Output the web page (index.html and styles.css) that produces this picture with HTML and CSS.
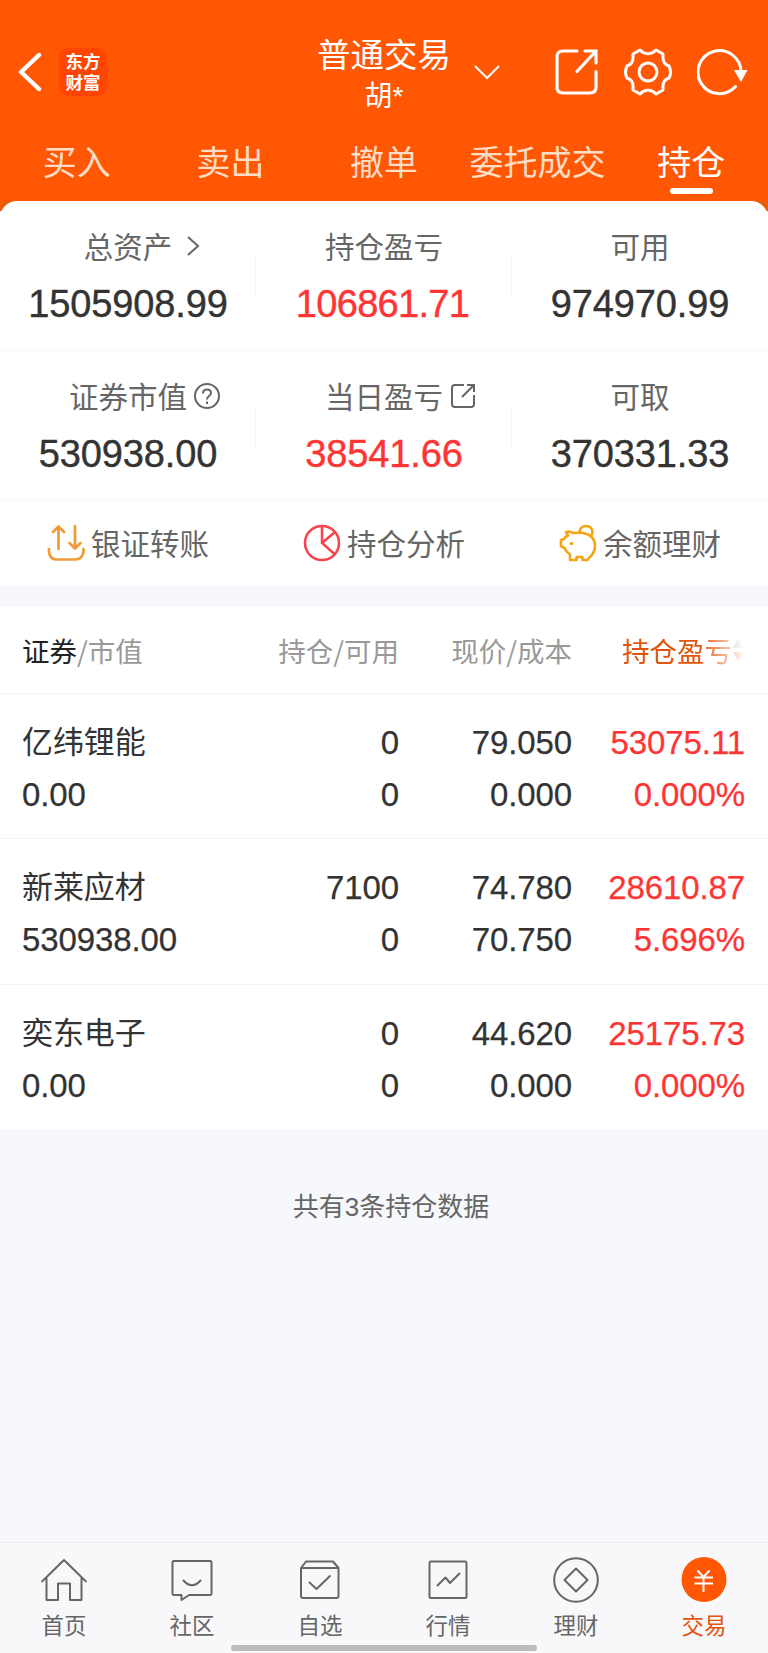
FILE: index.html
```
<!DOCTYPE html>
<html lang="zh-CN">
<head>
    <meta charset="UTF-8">
    <meta name="viewport" content="width=device-width, initial-scale=1.0">
    <title>普通交易 - 持仓</title>
    <link rel="stylesheet" href="styles.css">
</head>
<body>
    <header class="header">
        <div class="topbar">
            <div class="topbar-left">
                <svg class="back" width="24" height="40" viewBox="0 0 24 40"><path d="M21 3L3 20L21 37" fill="none" stroke="#fff" stroke-width="4.4" stroke-linecap="round" stroke-linejoin="round"/></svg>
                <div class="logo">东方<br>财富</div>
            </div>
            <div class="title">
                <h1>普通交易</h1>
                <p>胡*</p>
            </div>
            <div class="topbar-right">
                <svg class="chevron" width="28" height="16" viewBox="0 0 28 16"><path d="M2 2L14 14L26 2" fill="none" stroke="#fff" stroke-width="2"/></svg>
                <svg class="share" width="44" height="48" viewBox="0 0 44 48" fill="none" stroke="#fff" stroke-width="3.2" stroke-linecap="round"><path d="M23 3H9Q3 3 3 9V39Q3 45 9 45H36Q42 45 42 39V23.500M31 3H42V15M41 4L23 23.500"/></svg>
                <svg class="gear" width="48" height="48" viewBox="0 0 48 48" fill="none" stroke="#fff" stroke-width="3" stroke-linejoin="round"><path d="M16 2L19 4.500Q24 7 29 4.500L32 2L39 6V10Q39 16 45 18Q48 24 45 30Q39 32 39 38V42L32 46L29 43.500Q24 41 19 43.500L16 46L9 42V38Q9 32 3 30Q0 24 3 18Q9 16 9 10V6Z"/><circle cx="24" cy="24" r="9"/></svg>
                <svg class="refresh" width="52" height="48" viewBox="0 0 52 48"><path d="M38.500 38.500A21.500 21.500 0 1 1 44 24" fill="none" stroke="#fff" stroke-width="3" stroke-linecap="round"/><path d="M37 22H50.500L44 34Z" fill="#fff"/></svg>
            </div>
        </div>
        <nav class="tabs">
            <a>买入</a>
            <a>卖出</a>
            <a>撤单</a>
            <a>委托成交</a>
            <a class="active">持仓</a>
        </nav>
    </header>

    <section class="summary-wrap">
        <div class="summary">
            <div class="summary-row">
                <div class="cell">
                    <div class="label">总资产<svg class="arrow" width="14" height="20" viewBox="0 0 14 20"><path d="M2 1L12 10L2 19" fill="none" stroke="#666" stroke-width="2"/></svg></div>
                    <div class="value">1505908.99</div>
                </div>
                <div class="cell">
                    <div class="label">持仓盈亏</div>
                    <div class="value red tight">106861.71</div>
                </div>
                <div class="cell">
                    <div class="label">可用</div>
                    <div class="value">974970.99</div>
                </div>
            </div>
            <div class="summary-row">
                <div class="cell">
                    <div class="label">证券市值<svg class="help" width="26" height="26" viewBox="0 0 26 26" fill="none" stroke="#666" stroke-width="2"><circle cx="13" cy="13" r="12"/><path d="M9 10.500Q9 6.500 13 6.500T17 10Q17 11.500 15 13T13 16.500"/><path d="M13 18.500V21"/></svg></div>
                    <div class="value">530938.00</div>
                </div>
                <div class="cell">
                    <div class="label">当日盈亏<svg class="open" width="26" height="26" viewBox="0 0 26 26" fill="none" stroke="#666" stroke-width="2"><path d="M14 2H5Q2 2 2 5V21Q2 24 5 24H21Q24 24 24 21V12M17 2H24V9M24 2L12 14"/></svg></div>
                    <div class="value red">38541.66</div>
                </div>
                <div class="cell">
                    <div class="label">可取</div>
                    <div class="value">370331.33</div>
                </div>
            </div>
            <div class="actions">
                <a><svg width="38" height="38" viewBox="0 0 38 38" fill="none" stroke="#f09a37" stroke-width="2.700" stroke-linecap="round" stroke-linejoin="round"><path d="M11.500 25V3M6 8L11.500 2.500L17 8M28 2V24M22.500 19L28 24.500L33.500 19M2 25V28Q3 35.500 10 35.500H28Q35 35.500 36.500 28V25"/></svg><span>银证转账</span></a>
                <a><svg width="38" height="38" viewBox="0 0 38 38" fill="none" stroke="#f9424b" stroke-width="2.500"><circle cx="19" cy="19" r="17"/><path d="M19 2V19L31.500 30M19 19L32 8"/></svg><span>持仓分析</span></a>
                <a><svg width="38" height="38" viewBox="0 0 38 38" fill="none" stroke="#f5a511" stroke-width="2.600" stroke-linejoin="round"><path d="M7 8Q11 7 14 9Q19 8.500 24 9Q36 11 36 22Q36 29 29.500 34.500L28.500 36H23.500V33H17.500V36H11V30.500Q7 28 5.500 24L2 22V16L5 15Q6 13 9 11.500ZM20.500 8.500Q21 2 27 2Q33 2 33.500 8Q33.500 11 31 12.500"/><circle cx="12.500" cy="19.500" r="1.800" fill="#f5a511" stroke="none"/></svg><span>余额理财</span></a>
            </div>
        </div>
    </section>

    <section class="holdings">
        <div class="row head">
            <div><b>证券</b>/市值</div>
            <div>持仓/可用</div>
            <div>现价/成本</div>
            <div class="sorted">持仓盈亏<svg width="12" height="24" viewBox="0 0 12 24"><path d="M6 1L11 10H1Z" fill="#999"/><path d="M1 14H11L6 23Z" fill="#e2540b"/></svg></div>
        </div>
        <div class="row">
            <div><span class="name">亿纬锂能</span><span>0.00</span></div>
            <div><span>0</span><span>0</span></div>
            <div><span>79.050</span><span>0.000</span></div>
            <div class="red"><span>53075.11</span><span>0.000%</span></div>
        </div>
        <div class="row">
            <div><span class="name">新莱应材</span><span>530938.00</span></div>
            <div><span>7100</span><span>0</span></div>
            <div><span>74.780</span><span>70.750</span></div>
            <div class="red"><span>28610.87</span><span>5.696%</span></div>
        </div>
        <div class="row">
            <div><span class="name">奕东电子</span><span>0.00</span></div>
            <div><span>0</span><span>0</span></div>
            <div><span>44.620</span><span>0.000</span></div>
            <div class="red"><span>25175.73</span><span>0.000%</span></div>
        </div>
    </section>

    <p class="count">共有3条持仓数据</p>

    <footer class="navbar">
        <a><svg width="48" height="48" viewBox="0 0 48 48"><path d="M1.500 25L24 3L46.500 25M6.500 21V43H18V26.500H30V43H41.500V21"/></svg>首页</a>
        <a><svg width="48" height="48" viewBox="0 0 48 48"><path d="M6 4H42Q43.500 4 43.500 5.500V36.500Q43.500 38 42 38H21L13.500 43V38H6Q4.500 38 4.500 36.500V5.500Q4.500 4 6 4ZM15 23Q24 33.500 33 23"/></svg>社区</a>
        <a><svg width="48" height="48" viewBox="0 0 48 48"><path d="M5 11L10 4.500H37L42.500 11V39Q42.500 41 40.500 41H7Q5 41 5 39ZM5 11H42.500M13 25L20.500 32L34.500 18.500"/></svg>自选</a>
        <a><svg width="48" height="48" viewBox="0 0 48 48"><rect x="5.500" y="4.500" width="37" height="36.500" rx="1.500"/><path d="M13 29L21.500 20.500L26 26L36 16"/></svg>行情</a>
        <a><svg width="48" height="48" viewBox="0 0 48 48"><circle cx="24" cy="23" r="21.800"/><path d="M24 11.500L35.500 23L24 34.500L12.500 23Z"/></svg>理财</a>
        <a class="active"><svg width="48" height="48" viewBox="0 0 48 48"><circle cx="24" cy="22.500" r="22.500" fill="#ff5703" stroke="none"/><path d="M17.500 13.500L23.500 20L29.500 13.500M14.500 20.500H33M14.500 26.500H33M23.500 20V35" stroke="#fff"/></svg>交易</a>
        <div class="home-indicator"></div>
    </footer>
</body>
</html>
```
FILE: styles.css
```
* {
    box-sizing: border-box;
    margin: 0;
    padding: 0;
}

body {
    font-family: "Liberation Sans", "Noto Sans CJK SC", sans-serif;
    min-height: 1653px;
    display: flex;
    flex-direction: column;
    background-color: #f6f8fb;
    color: #333;
}

svg {
    display: block;
    flex: none;
}

/* header */
.header {
    height: 201px;
    padding-top: 35px;
    background-color: #ff5703;
    color: #fff;
}

.topbar {
    display: grid;
    grid-template-columns: 256px 256px 256px;
    height: 100px;
}

.topbar-left {
    display: flex;
    align-items: center;
    height: 73px;
    padding-left: 18px;
}

.logo {
    width: 48px;
    height: 48px;
    margin-left: 17px;
    padding-top: 2px;
    border-radius: 9px;
    background-color: #ff4503;
    font-family: "Noto Sans CJK SC", sans-serif;
    font-size: 17.5px;
    font-weight: bold;
    line-height: 21px;
    text-align: center;
}

.title {
    text-align: center;
}

.title h1 {
    font-size: 33.5px;
    font-weight: normal;
    line-height: 42px;
}

.title p {
    font-size: 28px;
    line-height: 40px;
}

.topbar-right {
    display: flex;
    align-items: center;
    height: 73px;
    margin-left: -39px;
}

.share {
    margin-left: 53px;
}

.gear {
    margin-left: 26px;
}

.refresh {
    margin-left: 25px;
}

.tabs {
    display: grid;
    grid-template-columns: repeat(5, 1fr);
}

.tabs a {
    display: flex;
    flex-direction: column;
    align-items: center;
    font-size: 34px;
    line-height: 56px;
    color: #ffdcc5;
}

.tabs .active {
    color: #fff;
}

.tabs .active::after {
    content: "";
    width: 43px;
    height: 6px;
    margin-top: -3px;
    border-radius: 3px;
    background-color: #fff;
}

/* assets */
.summary-wrap {
    background: linear-gradient(#ea5b08 10px, #f6f8fb 10px);
}

.summary {
    height: 385px;
    border-radius: 17px 17px 0 0;
    background-color: #fff;
}

.summary-row {
    display: grid;
    grid-template-columns: repeat(3, 1fr);
    height: 150px;
    border-bottom: 1px solid #f6f6f6;
}

.cell {
    display: flex;
    flex-direction: column;
    align-items: center;
    padding-top: 27px;
    background: linear-gradient(#f7f7f7, #f7f7f7) no-repeat right 53px / 1px 46px;
}

.cell:last-child {
    background: none;
}

.label {
    display: flex;
    align-items: center;
    font-size: 29.5px;
    line-height: 40px;
    color: #666;
}

.arrow {
    margin: 0 -28px 4px 14px;
}

.help {
    margin: 0 -33px 4px 7px;
}

.open {
    margin: 0 -33px 4px 7px;
}

.value {
    margin-top: 15px;
    font-size: 38px;
    line-height: 42px;
    letter-spacing: -0.15px;
    -webkit-text-stroke: 0.4px;
}

.tight {
    margin-left: -3px;
    letter-spacing: -0.7px;
}

.red {
    color: #ff3434;
}

.actions {
    display: grid;
    grid-template-columns: repeat(3, 1fr);
    height: 85px;
}

.actions a {
    display: flex;
    align-items: center;
    justify-content: center;
    gap: 6px;
    font-size: 29.5px;
    color: #666;
}

.actions svg {
    margin-bottom: 2px;
}

.actions span {
    margin-bottom: 4px;
}

/* holdings list */
.holdings {
    margin-top: 21px;
    background-color: #fff;
}

.row {
    display: grid;
    grid-template-columns: 217px 160px 173px 173px;
    height: 145.5px;
    padding: 23px 23px 0 22px;
    font-size: 33px;
    line-height: 52px;
    letter-spacing: -0.1px;
    text-align: right;
}

.row + .row {
    border-top: 1px solid #f5f5f5;
}

.row div:first-child {
    text-align: left;
}

.row span {
    display: block;
    height: 52px;
    -webkit-text-stroke: 0.25px;
}

.row .name {
    font-size: 31px;
    -webkit-text-stroke: 0;
}

.head {
    height: 85.5px;
    padding-top: 17px;
    font-family: "Noto Sans CJK SC", sans-serif;
    font-size: 27.5px;
    letter-spacing: 0;
    color: #999;
}

.head b {
    font-weight: normal;
    color: #222;
}

.head .sorted {
    display: flex;
    align-items: center;
    height: 52px;
    margin-left: 50px;
    white-space: nowrap;
    color: #e2540b;
    -webkit-mask-image: linear-gradient(to right, #000 62%, transparent 100%);
    mask-image: linear-gradient(to right, #000 62%, transparent 100%);
}

.count {
    margin: 58px 0 0 14px;
    font-size: 26px;
    line-height: 40px;
    text-align: center;
    color: #666;
}

/* bottom navigation */
.navbar {
    display: grid;
    grid-template-columns: repeat(6, 1fr);
    position: relative;
    height: 111px;
    margin-top: auto;
    padding-top: 14px;
    border-top: 1px solid #eeeef0;
    background-color: #f8f8fb;
}

.navbar a {
    display: flex;
    flex-direction: column;
    align-items: center;
    font-size: 22.5px;
    line-height: 40px;
    gap: 2px;
    color: #666;
}

.navbar svg {
    fill: none;
    stroke: #666;
    stroke-width: 2;
    stroke-linejoin: round;
}

.navbar .active {
    color: #e2540b;
}

.home-indicator {
    position: absolute;
    left: 231px;
    bottom: 2px;
    width: 306px;
    height: 6px;
    border-radius: 3px;
    background-color: #bbbbbd;
}
```
